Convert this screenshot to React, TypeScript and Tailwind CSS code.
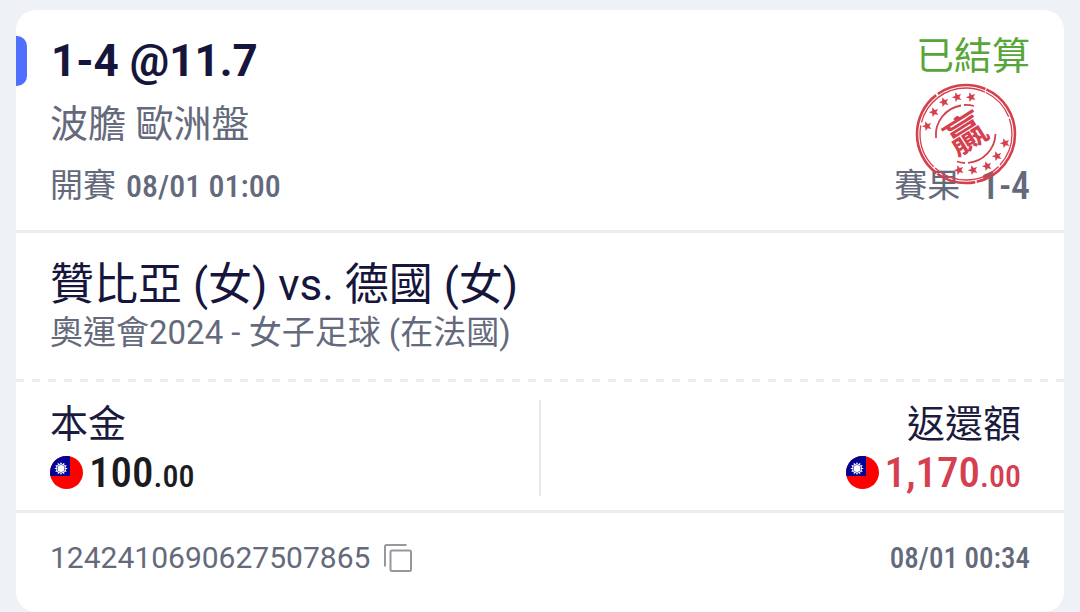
import type { ReactNode } from 'react';

const STARS = [
  [-39, -8], [-32, -22], [-22, -32], [-9, -37], [5, -37],
  [39, 9], [31, 22], [21, 32], [7, 36], [-7, 36],
];

const STAR_POINTS = '0,-5 1.4,-1.6 5,-1.5 2.2,0.8 3.1,4.3 0,2.3 -3.1,4.3 -2.2,0.8 -5,-1.5 -1.4,-1.6';

// Round "won" stamp, laid over the result line
function WinStamp() {
  return (
    <svg viewBox="-52 -52 104 104" className="w-[104px] h-[104px]" fill="none" stroke="#d5404f" role="img" aria-label="贏">
      <circle r="49" strokeWidth="2.6" strokeDasharray="66 1.5 40 1 90 2 50 1" />
      <circle r="46" strokeWidth="1.3" strokeDasharray="34 2 70 2 45 3 80 1" />
      <path d="M-30 4 A30 30 0 0 1 -5 -28.500 M-2 -29 A29 29 0 0 1 8 -28" strokeWidth="1.8" />
      <path d="M29.500 0 A30 30 0 0 1 2 28.900 M-1 29 A29 29 0 0 1 -9 27.500" strokeWidth="1.8" />
      {STARS.map(([x, y]) => (
        <polygon key={`${x},${y}`} points={STAR_POINTS} transform={`translate(${x} ${y}) rotate(-20)`} fill="#d5404f" stroke="none" />
      ))}
      <text
        transform="rotate(-32)"
        y="14"
        textAnchor="middle"
        fontSize="40"
        fill="#d5404f"
        stroke="none"
        className="font-['Noto_Sans_CJK_TC',sans-serif] font-bold"
      >
        贏
      </text>
    </svg>
  );
}

function FlagTW() {
  const rays = Array.from({ length: 12 }, (_, i) => i * 30);
  return (
    <svg viewBox="0 0 33 33" className="w-[33px] h-[33px] shrink-0" aria-hidden="true">
      <clipPath id="flag-round">
        <circle cx="16.500" cy="16.500" r="16.500" />
      </clipPath>
      <g clipPath="url(#flag-round)">
        <rect width="33" height="33" fill="#fe0000" />
        <rect width="20" height="20" fill="#000095" />
        {rays.map((a) => (
          <path key={a} d="M-1.300 -4 L0 -6.600 L1.300 -4 Z" transform={`translate(11 12.500) rotate(${a})`} fill="#fff" />
        ))}
        <circle cx="11" cy="12.500" r="3.500" fill="#fff" />
      </g>
    </svg>
  );
}

function Num({ children, className = '' }: { children: ReactNode; className?: string }) {
  return (
    <span className={`font-['Roboto_Condensed','Liberation_Sans_Narrow',Roboto,sans-serif] font-medium ${className}`}>
      {children}
    </span>
  );
}

function Amount({ label, whole, cents, tone, className = '' }: {
  label: string;
  whole: string;
  cents: string;
  tone: string;
  className?: string;
}) {
  return (
    <div className={`flex flex-col ${className}`}>
      <span className="text-[38px] leading-[48px] text-[#1b1b3e]">{label}</span>
      <div className={`flex h-12 items-center gap-[6px] ${tone}`}>
        <FlagTW />
        <span className="flex items-baseline">
          <Num className="text-[43px] leading-[46px]">{whole}</Num>
          <Num className="text-[32px] leading-[40px]">{cents}</Num>
        </span>
      </div>
    </div>
  );
}

export default function App() {
  return (
    <main className="min-h-screen bg-[#eef2f6] px-4 pt-[10px] font-[Roboto,'Noto_Sans_CJK_TC',sans-serif] text-[#646a7c]">
      <article className="overflow-hidden rounded-[20px] bg-white">
        {/* Pick + status */}
        <section className="relative flex justify-between border-b-3 border-[#ebecf1] pt-[26px] pb-[24px] pr-[34px]">
          <div className="flex flex-col">
            <div className="flex items-center gap-6">
              <span className="h-[50px] w-[11px] rounded-r-[10px] bg-[#4f6fff]" />
              <h1 className="text-[44px] leading-[50px] font-bold text-[#16163c]">1-4 @11.7</h1>
            </div>
            <p className="mt-[14px] pl-[34px] text-[38px] leading-[48px]">波膽 歐洲盤</p>
            <p className="mt-[18px] flex gap-[10px] pl-[34px] text-[33px] leading-[40px]">
              開賽 <Num className="text-[32px]">08/01 01:00</Num>
            </p>
          </div>
          <div className="flex flex-col items-end justify-between">
            <span className="text-[38px] leading-[40px] text-[#57a639]">已結算</span>
            <p className="flex gap-5 text-[33px] leading-[40px]">
              賽果 <Num className="text-[38px]">1-4</Num>
            </p>
          </div>
          <div className="absolute top-[72px] right-[46px]">
            <WinStamp />
          </div>
        </section>

        {/* Match */}
        <section className="px-[34px] pt-[26px] pb-[24px]">
          <h2 className="text-[44px] leading-[52px] text-[#16163c]">贊比亞 (女) vs. 德國 (女)</h2>
          <p className="text-[33px] leading-[44px]">奧運會2024 - 女子足球 (在法國)</p>
        </section>
        <div className="h-[3px] bg-[repeating-linear-gradient(90deg,#ededf1_0_8px,transparent_8px_16px)]" />

        {/* Stake / return */}
        <section className="grid grid-cols-[1fr_2px_1fr] border-b-3 border-[#ebecf1] px-[34px] pt-[18px] pb-[14px]">
          <Amount label="本金" whole="100" cents=".00" tone="text-[#1c1c1e]" />
          <div className="bg-[#e6e7ec]" />
          <Amount label="返還額" whole="1,170" cents=".00" tone="text-[#d5404f]" className="items-end pr-[9px]" />
        </section>

        <footer className="flex items-center justify-between px-[34px] pt-[25px] pb-[34px]">
          <div className="flex items-center gap-[14px]">
            <span className="text-[30px] leading-[40px]">1242410690627507865</span>
            <button type="button" aria-label="複製" className="text-[#96989c]">
              <svg viewBox="0 0 28 28" className="w-7 h-7" fill="none" stroke="currentColor" strokeWidth="2">
                <path d="M1 22.500 V2.500 Q1 1 2.500 1 H22.500" />
                <rect x="6.500" y="6.500" width="20.500" height="20.500" rx="1.500" />
              </svg>
            </button>
          </div>
          <Num className="text-[29px] leading-[40px]">08/01 00:34</Num>
        </footer>
      </article>
    </main>
  );
}
